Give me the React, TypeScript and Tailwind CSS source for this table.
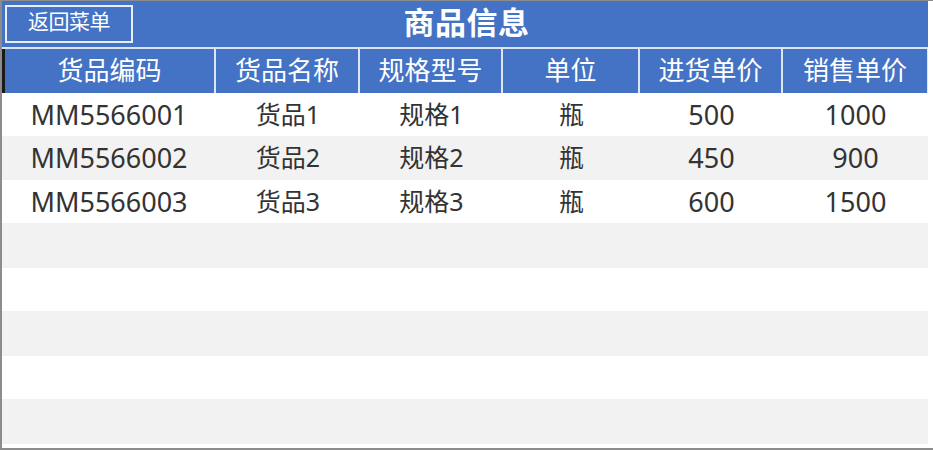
import React from "react";

const headers = ["货品编码", "货品名称", "规格型号", "单位", "进货单价", "销售单价"];
const rows: string[][] = [
  ["MM5566001", "货品1", "规格1", "瓶", "500", "1000"],
  ["MM5566002", "货品2", "规格2", "瓶", "450", "900"],
  ["MM5566003", "货品3", "规格3", "瓶", "600", "1500"],
  ["", "", "", "", "", ""],
  ["", "", "", "", "", ""],
  ["", "", "", "", "", ""],
  ["", "", "", "", "", ""],
  ["", "", "", "", "", ""],
];

const rowClasses = [
  "h-[43px] bg-white",
  "h-[44px] bg-[#f2f2f2]",
  "h-[43px] bg-white",
  "h-[45px] bg-[#f2f2f2]",
  "h-[43px] bg-white",
  "h-[45px] bg-[#f2f2f2]",
  "h-[43px] bg-white",
  "h-[45px] bg-[#f2f2f2]",
];

const font = { fontFamily: '"Noto Sans", "Noto Sans CJK SC", sans-serif' };

const isLatin = (s: string) => /^[A-Za-z0-9]+$/.test(s);

export default function App() {
  return (
    <div
      className="w-[933px] h-[450px] bg-white border-t border-t-[#8c8c8c] border-l-2 border-l-[#8c8c8c] border-b-2 border-b-[#8c8c8c] overflow-hidden"
      style={font}
    >
      <div className="w-[926px] flex flex-col">
        {/* Title bar */}
        <div className="h-[46px] bg-[#4472c4] grid grid-cols-[1fr_auto_1fr] items-center pl-[3px]">
          <div className="flex items-center">
            <button className="w-[128px] h-[38px] border-2 border-[#e8eef8] text-white text-[21px] leading-none flex items-start justify-center pt-[4px] tracking-[-0.5px]">
              返回菜单
            </button>
          </div>
          <div className="text-white font-bold text-[31px] leading-none tracking-[0.5px] pb-[4px]">商品信息</div>
          <div />
        </div>
        {/* Header */}
        <div className="h-[46px] border-t-2 border-t-[#dde5f3] flex">
          <div className="w-[3px] bg-[#1a1a1a]" />
          <div className="flex-1 grid grid-cols-[211px_144px_143px_137px_143px_145px] bg-[#4472c4]">
            {headers.map((h, i) => (
              <div
                key={h}
                className={
                  "flex items-center justify-center text-white text-[26px] leading-none pb-[2px] " +
                  (i < 5 ? "border-r-2 border-r-[#dde5f3]" : "border-r border-r-[#dde5f3]")
                }
              >
                {h}
              </div>
            ))}
          </div>
        </div>
        {/* Data */}
        <div className="flex flex-col">
          {rows.map((r, ri) => (
            <div key={ri} className={"grid grid-cols-[214px_144px_143px_137px_143px_145px] " + rowClasses[ri]}>
              {r.map((c, ci) => (
                <div
                  key={ci}
                  className={
                    "flex items-center justify-center text-[#333333] leading-none pb-[1px] " +
                    (isLatin(c) ? "text-[27px]" : "text-[25px]")
                  }
                >
                  {c}
                </div>
              ))}
            </div>
          ))}
        </div>
      </div>
    </div>
  );
}
